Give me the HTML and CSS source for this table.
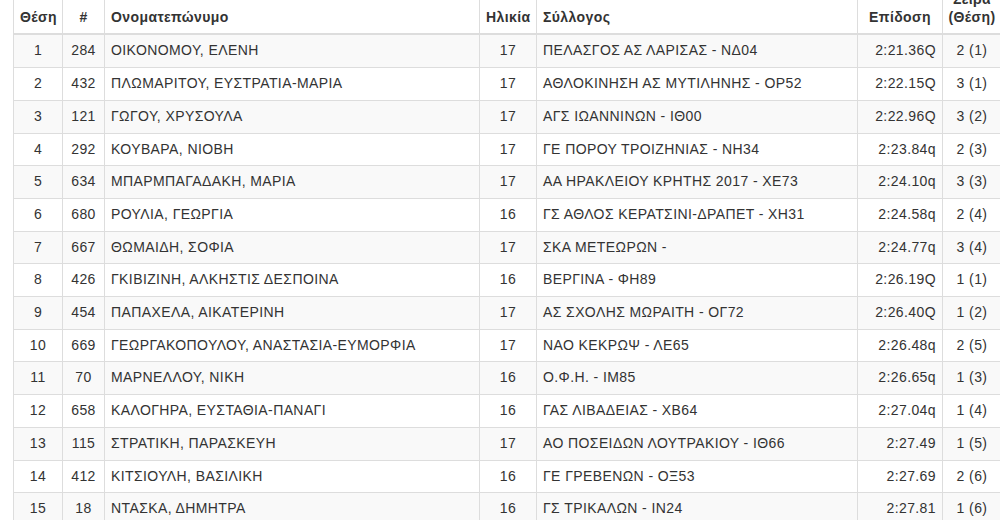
FILE: index.html
```html
<!DOCTYPE html>
<html lang="el">
<head>
<meta charset="utf-8">
<title>Αποτελέσματα</title>
<link rel="stylesheet" href="styles.css">
</head>
<body>
<div class="page">
<table class="results">
<colgroup>
<col class="c-pos"><col class="c-bib"><col class="c-name"><col class="c-age"><col class="c-club"><col class="c-time"><col class="c-heat">
</colgroup>
<thead>
<tr><th class="ctr">Θέση</th><th class="ctr">#</th><th>Ονοματεπώνυμο</th><th class="ctr">Ηλικία</th><th>Σύλλογος</th><th class="ctr">Επίδοση</th><th class="ctr heat">Σειρά (Θέση)</th></tr>
</thead>
<tbody>
<tr><td class="ctr">1</td><td class="ctr">284</td><td>ΟΙΚΟΝΟΜΟΥ, ΕΛΕΝΗ</td><td class="ctr">17</td><td>ΠΕΛΑΣΓΟΣ ΑΣ ΛΑΡΙΣΑΣ - ΝΔ04</td><td class="rgt">2:21.36Q</td><td class="ctr heat">2 (1)</td></tr>
<tr><td class="ctr">2</td><td class="ctr">432</td><td>ΠΛΩΜΑΡΙΤΟΥ, ΕΥΣΤΡΑΤΙΑ-ΜΑΡΙΑ</td><td class="ctr">17</td><td>ΑΘΛΟΚΙΝΗΣΗ ΑΣ ΜΥΤΙΛΗΝΗΣ - ΟΡ52</td><td class="rgt">2:22.15Q</td><td class="ctr heat">3 (1)</td></tr>
<tr><td class="ctr">3</td><td class="ctr">121</td><td>ΓΩΓΟΥ, ΧΡΥΣΟΥΛΑ</td><td class="ctr">17</td><td>ΑΓΣ ΙΩΑΝΝΙΝΩΝ - ΙΘ00</td><td class="rgt">2:22.96Q</td><td class="ctr heat">3 (2)</td></tr>
<tr><td class="ctr">4</td><td class="ctr">292</td><td>ΚΟΥΒΑΡΑ, ΝΙΟΒΗ</td><td class="ctr">17</td><td>ΓΕ ΠΟΡΟΥ ΤΡΟΙΖΗΝΙΑΣ - ΝΗ34</td><td class="rgt">2:23.84q</td><td class="ctr heat">2 (3)</td></tr>
<tr><td class="ctr">5</td><td class="ctr">634</td><td>ΜΠΑΡΜΠΑΓΑΔΑΚΗ, ΜΑΡΙΑ</td><td class="ctr">17</td><td>ΑΑ ΗΡΑΚΛΕΙΟΥ ΚΡΗΤΗΣ 2017 - ΧΕ73</td><td class="rgt">2:24.10q</td><td class="ctr heat">3 (3)</td></tr>
<tr><td class="ctr">6</td><td class="ctr">680</td><td>ΡΟΥΛΙΑ, ΓΕΩΡΓΙΑ</td><td class="ctr">16</td><td>ΓΣ ΑΘΛΟΣ ΚΕΡΑΤΣΙΝΙ-ΔΡΑΠΕΤ - ΧΗ31</td><td class="rgt">2:24.58q</td><td class="ctr heat">2 (4)</td></tr>
<tr><td class="ctr">7</td><td class="ctr">667</td><td>ΘΩΜΑΙΔΗ, ΣΟΦΙΑ</td><td class="ctr">17</td><td>ΣΚΑ ΜΕΤΕΩΡΩΝ -</td><td class="rgt">2:24.77q</td><td class="ctr heat">3 (4)</td></tr>
<tr><td class="ctr">8</td><td class="ctr">426</td><td>ΓΚΙΒΙΖΙΝΗ, ΑΛΚΗΣΤΙΣ ΔΕΣΠΟΙΝΑ</td><td class="ctr">16</td><td>ΒΕΡΓΙΝΑ - ΦΗ89</td><td class="rgt">2:26.19Q</td><td class="ctr heat">1 (1)</td></tr>
<tr><td class="ctr">9</td><td class="ctr">454</td><td>ΠΑΠΑΧΕΛΑ, ΑΙΚΑΤΕΡΙΝΗ</td><td class="ctr">17</td><td>ΑΣ ΣΧΟΛΗΣ ΜΩΡΑΙΤΗ - ΟΓ72</td><td class="rgt">2:26.40Q</td><td class="ctr heat">1 (2)</td></tr>
<tr><td class="ctr">10</td><td class="ctr">669</td><td>ΓΕΩΡΓΑΚΟΠΟΥΛΟΥ, ΑΝΑΣΤΑΣΙΑ-ΕΥΜΟΡΦΙΑ</td><td class="ctr">17</td><td>ΝΑΟ ΚΕΚΡΩΨ - ΛΕ65</td><td class="rgt">2:26.48q</td><td class="ctr heat">2 (5)</td></tr>
<tr><td class="ctr">11</td><td class="ctr">70</td><td>ΜΑΡΝΕΛΛΟΥ, ΝΙΚΗ</td><td class="ctr">16</td><td>Ο.Φ.Η. - ΙΜ85</td><td class="rgt">2:26.65q</td><td class="ctr heat">1 (3)</td></tr>
<tr><td class="ctr">12</td><td class="ctr">658</td><td>ΚΑΛΟΓΗΡΑ, ΕΥΣΤΑΘΙΑ-ΠΑΝΑΓΙ</td><td class="ctr">16</td><td>ΓΑΣ ΛΙΒΑΔΕΙΑΣ - ΧΒ64</td><td class="rgt">2:27.04q</td><td class="ctr heat">1 (4)</td></tr>
<tr><td class="ctr">13</td><td class="ctr">115</td><td>ΣΤΡΑΤΙΚΗ, ΠΑΡΑΣΚΕΥΗ</td><td class="ctr">17</td><td>ΑΟ ΠΟΣΕΙΔΩΝ ΛΟΥΤΡΑΚΙΟΥ - ΙΘ66</td><td class="rgt">2:27.49</td><td class="ctr heat">1 (5)</td></tr>
<tr><td class="ctr">14</td><td class="ctr">412</td><td>ΚΙΤΣΙΟΥΛΗ, ΒΑΣΙΛΙΚΗ</td><td class="ctr">16</td><td>ΓΕ ΓΡΕΒΕΝΩΝ - ΟΞ53</td><td class="rgt">2:27.69</td><td class="ctr heat">2 (6)</td></tr>
<tr><td class="ctr">15</td><td class="ctr">18</td><td>ΝΤΑΣΚΑ, ΔΗΜΗΤΡΑ</td><td class="ctr">16</td><td>ΓΣ ΤΡΙΚΑΛΩΝ - ΙΝ24</td><td class="rgt">2:27.81</td><td class="ctr heat">1 (6)</td></tr>
</tbody>
</table>
</div>
</body>
</html>
```

FILE: styles.css
```css
html, body {
  margin: 0;
  padding: 0;
  background: #fff;
  overflow: hidden;
}
.page {
  width: 1000px;
  height: 520px;
  overflow: hidden;
  padding-left: 13px;
  box-sizing: border-box;
}
.results {
  border-collapse: collapse;
  table-layout: fixed;
  width: 988px;
  margin-top: -17px;
  font-family: "Liberation Sans", Arial, "Helvetica Neue", sans-serif;
  font-size: 14px;
  letter-spacing: 0.4px;
  line-height: 17.7px;
  color: #333;
  border: 1px solid #ddd;
}
.c-pos { width: 49px; }
.c-bib { width: 42px; }
.c-name { width: 375px; }
.c-age { width: 57px; }
.c-club { width: 321px; }
.c-time { width: 85px; }
.c-heat { width: 59px; }
.results th,
.results td {
  border: 1px solid #ddd;
  padding: 7px 6px;
  text-align: left;
  white-space: nowrap;
}
.results th {
  font-weight: bold;
  vertical-align: bottom;
  border-bottom-width: 2px;
  white-space: normal;
}
.results td { vertical-align: top; }
.results .heat { padding-left: 2px; padding-right: 2px; }
.results tbody tr:nth-child(odd) { background: #f9f9f9; }
.results .ctr { text-align: center; }
.results .rgt { text-align: right; }
```
